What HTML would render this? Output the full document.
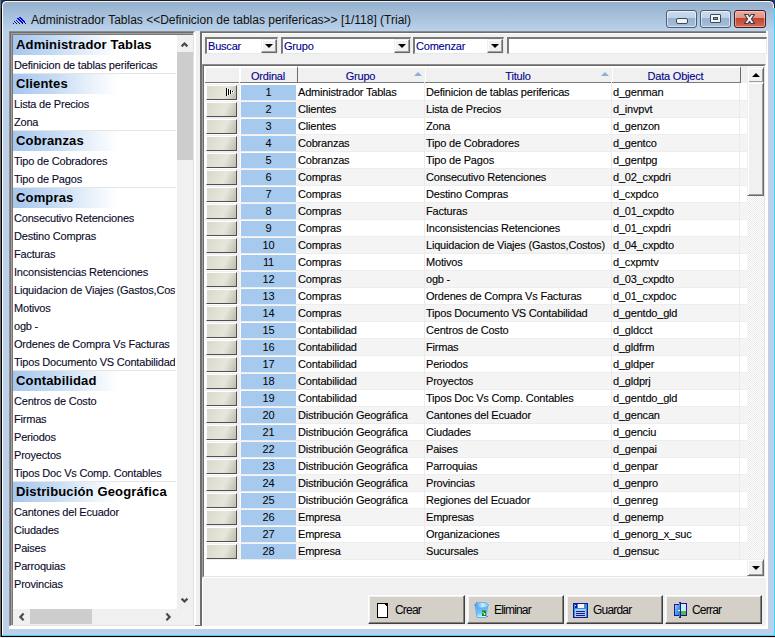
<!DOCTYPE html>
<html><head><meta charset="utf-8"><style>
*{margin:0;padding:0;box-sizing:border-box}
html,body{width:775px;height:638px;overflow:hidden}
body{position:relative;background:#BCD1E9;font-family:"Liberation Sans",sans-serif;font-size:11px;color:#000;letter-spacing:-.2px}
div,span,b,i,svg{position:absolute;display:block;font-weight:normal;font-style:normal;white-space:nowrap}
.abs{position:absolute}
/* frame */
#tb{left:0;top:0;width:775px;height:31px;background:linear-gradient(#92AECB,#BAD2EB)}
#tbl0{left:0;top:0;width:775px;height:1px;background:#1c1c1c}
#tbl1{left:0;top:1px;width:775px;height:1px;background:#F0F5FB}
#fl0{left:0;top:0;width:1px;height:638px;background:#707070}
#fl1{left:1px;top:0;width:1px;height:637px;background:#000}
#fl2{left:2px;top:1px;width:1px;height:635px;background:#fff}
#fb0{left:2px;top:635px;width:773px;height:1px;background:#3CD3F5}
#fb1{left:1px;top:636px;width:774px;height:1px;background:#000}
#fb2{left:0;top:637px;width:775px;height:1px;background:#E8E8E8}
#fr0{left:774px;top:1px;width:1px;height:635px;background:#3CD3F5}
#title{left:31px;top:13px;font-size:12px;line-height:14px;color:#101010;letter-spacing:0}
/* caption buttons */
.cb{top:10px;height:18px;width:31px;border:1px solid #4D5D73;border-radius:3px;background:linear-gradient(#CCDCEE 0,#BED1E7 45%,#98B2CF 46%,#A6BFDA 100%);box-shadow:inset 0 0 0 1px rgba(255,255,255,.55)}
#cmin{left:666px}
#cmax{left:700px}
#ccls{left:734px;width:32px;border-color:#4A1A22;background:linear-gradient(#E9AC9F 0,#DE9485 45%,#C2462B 46%,#D06A54 100%);box-shadow:inset 0 0 0 1px rgba(255,220,210,.5)}
/* client */
#client{left:9px;top:31px;width:759px;height:598px;background:#F0F0F0}
/* listbox */
#lb{left:9px;top:31px;width:186px;height:596px;border-top:1px solid #8E8E8E;border-left:1px solid #8E8E8E;border-right:1px solid #fff;border-bottom:1px solid #fff}
#lb2{left:10px;top:32px;width:184px;height:594px;border-top:1px solid #6E6E6E;border-left:1px solid #6E6E6E;border-right:1px solid #E3E3E3;border-bottom:1px solid #E3E3E3}
#lb3{left:11px;top:33px;width:182px;height:592px;border-top:1px solid #A0A0A0;border-left:1px solid #A0A0A0}
#lb4{left:12px;top:34px;width:181px;height:591px;border-top:1px solid #787878;border-left:1px solid #787878}
#lbc{left:13px;top:35px;width:164px;height:574px;background:#fff;overflow:hidden}
.lh{left:0;width:164px;height:20px;background:linear-gradient(90deg,#A6C6EE 0,#C4DAF3 40px,#E6F0FA 75px,#fff 105px)}
.lh span{left:3px;top:0;font-weight:bold;font-size:13px;line-height:20px;letter-spacing:.15px;color:#000}
.li{left:1px;width:161px;overflow:hidden;height:18px;line-height:18px;padding-top:1px;color:#0A0A28;font-size:11px}
.sep{left:0;width:163px;height:1px;background:#E6E6E6}
/* left scrollbars */
#lvs{left:177px;top:35px;width:16px;height:574px;background:#F0F0F0}
#lvthumb{left:177px;top:52px;width:16px;height:108px;background:#CDCDCD}
#lhs{left:13px;top:609px;width:164px;height:16px;background:#F0F0F0}
#lhthumb{left:30px;top:609px;width:62px;height:15px;background:#CDCDCD}
#lcorner{left:177px;top:609px;width:16px;height:16px;background:#F0F0F0}
/* splitter */
#spw{left:194px;top:33px;width:2px;height:593px;background:#fff}
#spd{left:200px;top:31px;width:2px;height:596px;background:#6E6E6E}
#spb{left:195px;top:625px;width:6px;height:1px;background:#6E6E6E}
/* right pane */
#rpt0{left:200px;top:31px;width:567px;height:1px;background:#8A8A8A}
#rpt1{left:200px;top:32px;width:567px;height:1px;background:#6E6E6E}
#rpw{left:202px;top:33px;width:565px;height:1px;background:#fff}
#rpwl{left:202px;top:33px;width:1px;height:594px;background:#fff}
#crt{left:766px;top:31px;width:2px;height:597px;background:#fff}
#crb{left:9px;top:626px;width:759px;height:3px;background:#fff}
/* combos */
.cmb{top:37px;height:17px;background:#fff;border-top:2px solid #7A7A7A;border-left:2px solid #7A7A7A;border-right:1px solid #E8E8E8;border-bottom:1px solid #E8E8E8}
.cmb span{left:1px;top:0;line-height:14px;color:#00008C;font-size:11px}
.dd{top:0;right:0;width:16px;height:14px;background:#F0F0F0;border-top:1px solid #F0F0F0;border-left:1px solid #F0F0F0;border-right:1px solid #696969;border-bottom:1px solid #696969;box-shadow:inset -1px -1px 0 #A0A0A0,inset 1px 1px 0 #fff}
.dd:after{content:"";position:absolute;left:3px;top:4px;border-left:4px solid transparent;border-right:4px solid transparent;border-top:4px solid #000}
/* grid */
#grid{left:202px;top:64px;width:564px;height:514px;border-top:1px solid #8A8A8A;border-left:1px solid #A0A0A0;border-right:1px solid #fff;border-bottom:1px solid #fff;background:#fff}
#grid2{left:203px;top:65px;width:562px;height:512px;border-top:1px solid #6A6A6A;border-left:1px solid #6A6A6A;border-right:1px solid #E3E3E3;border-bottom:1px solid #E3E3E3}
#gc{left:204px;top:66px;width:560px;height:510px;background:#fff;overflow:hidden;border-left:1px solid #fff}
#gi{left:0;top:0;width:559px;height:510px}
/* inside gc origin (205,66) */
.hd{top:0;height:17px;background:#F0F0F0;border-top:2px solid #fff;border-left:1px solid #fff}
.hdl{top:16px;height:1px;background:#7A7A7A}
.hd span{left:-2px;right:0;top:2px;text-align:center;color:#00008C;line-height:12px}
.sort{top:6px;width:0;height:0;border-left:4px solid transparent;border-right:4px solid transparent;border-bottom:4px solid #8FAED3}
.r{left:0;width:542px;height:17px;background:#fff}
.r.alt{background:linear-gradient(#EDEDED 0 1px,#F4F4F4 1px 17px,#EDEDED 17px);height:18px;z-index:1}
.rb{left:1px;top:2px;width:31px;height:15px;background:linear-gradient(115deg,#D8D8CA 0,#E2E2D6 40%,#E6E6DC 60%,#D4D4C6 78%,#BDBDAE 100%);border-top:1px solid #fff;border-left:1px solid #fff;border-right:1px solid #505050;border-bottom:1px solid #505050}
.ord{left:36px;top:2px;width:55px;height:15px;background:#A6C9EE;text-align:center;line-height:15px;color:#000}
.c1{left:93px;top:3px;line-height:13px}
.c2{left:221px;top:3px;line-height:13px}
.c3{left:408px;top:3px;line-height:13px}
.vl{top:17px;width:1px;height:477px;background:#EBEBEB;z-index:2}
.ptr{left:19px;top:2px;width:8px;height:8px}
/* grid vscroll */
#gvs{left:747px;top:67px;width:17px;height:509px;background:repeating-conic-gradient(#fff 0 25%,#E9E9E9 0 50%) 0 0/2px 2px}
.sbtn{left:747px;width:17px;background:#F0F0F0;border-top:1px solid #F0F0F0;border-left:1px solid #F0F0F0;border-right:1px solid #696969;border-bottom:1px solid #696969;box-shadow:inset 1px 1px 0 #fff,inset -1px -1px 0 #A0A0A0}
#gup{top:67px;height:16px}
#gthumb{top:82px;height:114px}
#gdn{top:559px;height:17px}
.tri{left:4px;width:0;height:0;border-left:4px solid transparent;border-right:4px solid transparent}
/* bottom buttons */
.btn{top:595px;width:97px;height:29px;background:#D4D0C8;border-top:1px solid #fff;border-left:1px solid #fff;border-right:1px solid #404040;border-bottom:1px solid #404040;box-shadow:inset -1px -1px 0 #808080,inset 1px 1px 0 #F0F0F0}
.btn span{left:26px;top:7px;font-size:12px;line-height:14px;letter-spacing:-.8px;color:#000}
.r span,.li,.cmb span,.hd span{-webkit-text-stroke:.1px currentColor}

.ic{left:0;top:0;width:35px;height:17px;background:#F0F0F0;border-top:1px solid #fff;border-left:1px solid #fff}

</style></head><body>
<div id="tb"></div><div id="tbl0"></div><div id="tbl1"></div>
<div id="fl0"></div><div id="fl1"></div><div id="fl2"></div>
<div id="fb0"></div><div id="fb1"></div><div id="fb2"></div><div id="fr0"></div>
<svg class="abs" style="left:13px;top:17px" width="13" height="7" viewBox="0 0 13 7" shape-rendering="crispEdges"><g fill="#0000F0"><rect x="0" y="6" width="1" height="1"/><rect x="1" y="4" width="1" height="1"/><rect x="2" y="5" width="1" height="1"/><rect x="3" y="6" width="1" height="1"/><rect x="3" y="3" width="1" height="1"/><rect x="4" y="4" width="1" height="1"/><rect x="5" y="5" width="1" height="1"/><rect x="6" y="6" width="1" height="1"/><rect x="4" y="1" width="1" height="1"/><rect x="5" y="2" width="1" height="1"/><rect x="6" y="3" width="1" height="1"/><rect x="7" y="4" width="1" height="1"/><rect x="8" y="5" width="1" height="1"/><rect x="9" y="6" width="1" height="1"/><rect x="5" y="1" width="1" height="1"/><rect x="6" y="2" width="1" height="1"/><rect x="7" y="3" width="1" height="1"/><rect x="8" y="4" width="1" height="1"/><rect x="9" y="5" width="1" height="1"/><rect x="6" y="0" width="1" height="1"/><rect x="7" y="1" width="1" height="1"/><rect x="8" y="2" width="1" height="1"/><rect x="9" y="3" width="1" height="1"/><rect x="10" y="4" width="1" height="1"/><rect x="11" y="5" width="1" height="1"/><rect x="12" y="6" width="1" height="1"/><rect x="7" y="0" width="1" height="1"/><rect x="8" y="1" width="1" height="1"/><rect x="9" y="2" width="1" height="1"/><rect x="10" y="3" width="1" height="1"/><rect x="11" y="4" width="1" height="1"/></g><g fill="#101010"><rect x="3" y="6" width="1" height="1"/><rect x="6" y="6" width="1" height="1"/><rect x="9" y="6" width="1" height="1"/><rect x="12" y="6" width="1" height="1"/></g></svg>
<svg style="left:0;top:0" width="8" height="8" viewBox="0 0 8 8"><rect x="1" y="0" width="7" height="8" fill="#9AB3D0"/><path d="M1 0H8V1H6Q2 1 2 5V8H1Z" fill="#0B3F86"/><path d="M2.5 8V5.5Q2.5 1.5 6 1.5H8" stroke="#fff" stroke-width="1" fill="none"/><path d="M1.5 8V5Q1.5 0.5 6 0.5H8" stroke="#1A1A1A" stroke-width="1" fill="none"/></svg>
<svg style="left:767px;top:0" width="8" height="8" viewBox="0 0 8 8"><rect x="0" y="0" width="8" height="8" fill="#9AB3D0"/><path d="M0 0H8V8H7V5Q7 1 3 1H0Z" fill="#0B3F86"/><path d="M0 1.5H2Q6.5 1.5 6.5 6V8" stroke="#fff" stroke-width="1" fill="none"/><path d="M0 0.5H2Q7.5 0.5 7.5 6V8" stroke="#1A1A1A" stroke-width="1" fill="none"/></svg>
<div id="title">Administrador Tablas &lt;&lt;Definicion de tablas perifericas&gt;&gt; [1/118] (Trial)</div>
<div class="cb" id="cmin"><i style="left:9px;top:7px;width:12px;height:6px;background:#F4F4F4;border:1px solid #3A4A5E;border-radius:2px"></i></div>
<div class="cb" id="cmax"><i style="left:9px;top:3px;width:11px;height:9px;background:#F4F4F4;border:1px solid #3A4A5E;border-radius:1px"><i style="left:2px;top:2px;width:5px;height:3px;background:#7E9CC2;border:1px solid #3A4A5E"></i></i></div>
<div class="cb" id="ccls"><svg class="abs" style="left:8px;top:2px" width="13" height="12" viewBox="0 0 13 12"><path d="M1.5 1.5H5L6.5 3.7L8 1.5H11.5L8.4 6L11.5 10.5H8L6.5 8.3L5 10.5H1.5L4.6 6Z" fill="#F6F6F6" stroke="#3A3C50" stroke-width="1.1" stroke-linejoin="round"/></svg></div>

<div id="client"></div>
<div id="lb"></div><div id="lb2"></div><div id="lb3"></div><div id="lb4"></div>
<div id="lbc">
<div class="lh" style="top:0px"><span>Administrador Tablas</span></div>
<div class="li" style="top:20px">Definicion de tablas perifericas</div>
<div class="sep" style="top:38px"></div>
<div class="lh" style="top:39px"><span>Clientes</span></div>
<div class="li" style="top:59px">Lista de Precios</div>
<div class="li" style="top:77px">Zona</div>
<div class="sep" style="top:95px"></div>
<div class="lh" style="top:96px"><span>Cobranzas</span></div>
<div class="li" style="top:116px">Tipo de Cobradores</div>
<div class="li" style="top:134px">Tipo de Pagos</div>
<div class="sep" style="top:152px"></div>
<div class="lh" style="top:153px"><span>Compras</span></div>
<div class="li" style="top:173px">Consecutivo Retenciones</div>
<div class="li" style="top:191px">Destino Compras</div>
<div class="li" style="top:209px">Facturas</div>
<div class="li" style="top:227px">Inconsistencias Retenciones</div>
<div class="li" style="top:245px">Liquidacion de Viajes (Gastos,Costos)</div>
<div class="li" style="top:263px">Motivos</div>
<div class="li" style="top:281px">ogb -</div>
<div class="li" style="top:299px">Ordenes de Compra Vs Facturas</div>
<div class="li" style="top:317px">Tipos Documento VS Contabilidad</div>
<div class="sep" style="top:335px"></div>
<div class="lh" style="top:336px"><span>Contabilidad</span></div>
<div class="li" style="top:356px">Centros de Costo</div>
<div class="li" style="top:374px">Firmas</div>
<div class="li" style="top:392px">Periodos</div>
<div class="li" style="top:410px">Proyectos</div>
<div class="li" style="top:428px">Tipos Doc Vs Comp. Contables</div>
<div class="sep" style="top:446px"></div>
<div class="lh" style="top:447px"><span>Distribución Geográfica</span></div>
<div class="li" style="top:467px">Cantones del Ecuador</div>
<div class="li" style="top:485px">Ciudades</div>
<div class="li" style="top:503px">Paises</div>
<div class="li" style="top:521px">Parroquias</div>
<div class="li" style="top:539px">Provincias</div>
</div>
<div id="lvs"></div><div id="lvthumb"></div>
<svg class="abs" style="left:180px;top:40px" width="10" height="8" viewBox="0 0 10 8"><path d="M1.6 6.4L4.5 3.5L7.4 6.4" stroke="#4A4A4A" stroke-width="2.2" fill="none" stroke-linejoin="miter"/></svg>
<svg class="abs" style="left:180px;top:597px" width="10" height="8" viewBox="0 0 10 8"><path d="M1.6 1.6L4.5 4.5L7.4 1.6" stroke="#4A4A4A" stroke-width="2.2" fill="none" stroke-linejoin="miter"/></svg>
<div id="lhs"></div><div id="lhthumb"></div><div id="lcorner"></div>
<svg class="abs" style="left:17px;top:612px" width="8" height="10" viewBox="0 0 8 10"><path d="M6.6 1.6L3.4 4.9L6.6 8.2" stroke="#4A4A4A" stroke-width="2.2" fill="none"/></svg>
<svg class="abs" style="left:165px;top:612px" width="8" height="10" viewBox="0 0 8 10"><path d="M1.4 1.6L4.6 4.9L1.4 8.2" stroke="#4A4A4A" stroke-width="2.2" fill="none"/></svg>

<div id="spw"></div><div id="spd"></div><div id="spb"></div>
<div id="rpt0"></div><div id="rpt1"></div><div id="rpw"></div><div id="rpwl"></div>
<div id="crt"></div><div id="crb"></div>

<div class="cmb" style="left:205px;width:73px"><span>Buscar</span><i class="dd"></i></div>
<div class="cmb" style="left:281px;width:130px"><span>Grupo</span><i class="dd"></i></div>
<div class="cmb" style="left:413px;width:91px"><span>Comenzar</span><i class="dd"></i></div>
<div class="cmb" style="left:507px;width:260px"></div>

<div id="grid"></div><div id="grid2"></div>
<div id="gc">
<div class="hd" style="left:0;width:34px"></div><i class="hdl" style="left:0;width:34px"></i>
<div class="hd" style="left:35px;width:57px"><span>Ordinal</span></div><i class="hdl" style="left:35px;width:57px"></i>
<div class="hd" style="left:92px;width:128px;border-left:1px solid #6A6A6A"><span>Grupo</span></div><i class="hdl" style="left:92px;width:127px"></i>
<i class="sort" style="left:209px"></i>
<div class="hd" style="left:220px;width:187px"><span>Titulo</span></div><i class="hdl" style="left:220px;width:186px"></i>
<i class="sort" style="left:396px"></i>
<div class="hd" style="left:407px;width:129px;border-right:1px solid #6A6A6A"><span>Data Object</span></div><i class="hdl" style="left:407px;width:129px"></i>
<div class="hd" style="left:536px;width:6px;border:0"></div>
<div style="left:0;top:17px;width:542px;height:493px">
<div class="r" style="top:0px"><b class="ic"></b><b class="rb"><svg class="ptr" width="8" height="8" viewBox="0 0 8 8" shape-rendering="crispEdges"><g fill="#000"><rect x="0" y="0" width="1" height="8"/><rect x="2" y="1" width="1" height="6"/><rect x="4" y="2" width="1" height="4"/><rect x="6" y="3" width="1" height="1"/></g><g fill="#fff"><rect x="1" y="0" width="1" height="8"/><rect x="3" y="1" width="1" height="6"/><rect x="5" y="2" width="1" height="4"/><rect x="7" y="3" width="1" height="2"/></g></svg></b><b class="ord">1</b><span class="c1">Administrador Tablas</span><span class="c2">Definicion de tablas perifericas</span><span class="c3">d_genman</span></div>
<div class="r alt" style="top:17px"><b class="ic"></b><b class="rb"></b><b class="ord">2</b><span class="c1">Clientes</span><span class="c2">Lista de Precios</span><span class="c3">d_invpvt</span></div>
<div class="r" style="top:34px"><b class="ic"></b><b class="rb"></b><b class="ord">3</b><span class="c1">Clientes</span><span class="c2">Zona</span><span class="c3">d_genzon</span></div>
<div class="r alt" style="top:51px"><b class="ic"></b><b class="rb"></b><b class="ord">4</b><span class="c1">Cobranzas</span><span class="c2">Tipo de Cobradores</span><span class="c3">d_gentco</span></div>
<div class="r" style="top:68px"><b class="ic"></b><b class="rb"></b><b class="ord">5</b><span class="c1">Cobranzas</span><span class="c2">Tipo de Pagos</span><span class="c3">d_gentpg</span></div>
<div class="r alt" style="top:85px"><b class="ic"></b><b class="rb"></b><b class="ord">6</b><span class="c1">Compras</span><span class="c2">Consecutivo Retenciones</span><span class="c3">d_02_cxpdri</span></div>
<div class="r" style="top:102px"><b class="ic"></b><b class="rb"></b><b class="ord">7</b><span class="c1">Compras</span><span class="c2">Destino Compras</span><span class="c3">d_cxpdco</span></div>
<div class="r alt" style="top:119px"><b class="ic"></b><b class="rb"></b><b class="ord">8</b><span class="c1">Compras</span><span class="c2">Facturas</span><span class="c3">d_01_cxpdto</span></div>
<div class="r" style="top:136px"><b class="ic"></b><b class="rb"></b><b class="ord">9</b><span class="c1">Compras</span><span class="c2">Inconsistencias Retenciones</span><span class="c3">d_01_cxpdri</span></div>
<div class="r alt" style="top:153px"><b class="ic"></b><b class="rb"></b><b class="ord">10</b><span class="c1">Compras</span><span class="c2">Liquidacion de Viajes (Gastos,Costos)</span><span class="c3">d_04_cxpdto</span></div>
<div class="r" style="top:170px"><b class="ic"></b><b class="rb"></b><b class="ord">11</b><span class="c1">Compras</span><span class="c2">Motivos</span><span class="c3">d_cxpmtv</span></div>
<div class="r alt" style="top:187px"><b class="ic"></b><b class="rb"></b><b class="ord">12</b><span class="c1">Compras</span><span class="c2">ogb -</span><span class="c3">d_03_cxpdto</span></div>
<div class="r" style="top:204px"><b class="ic"></b><b class="rb"></b><b class="ord">13</b><span class="c1">Compras</span><span class="c2">Ordenes de Compra Vs Facturas</span><span class="c3">d_01_cxpdoc</span></div>
<div class="r alt" style="top:221px"><b class="ic"></b><b class="rb"></b><b class="ord">14</b><span class="c1">Compras</span><span class="c2">Tipos Documento VS Contabilidad</span><span class="c3">d_gentdo_gld</span></div>
<div class="r" style="top:238px"><b class="ic"></b><b class="rb"></b><b class="ord">15</b><span class="c1">Contabilidad</span><span class="c2">Centros de Costo</span><span class="c3">d_gldcct</span></div>
<div class="r alt" style="top:255px"><b class="ic"></b><b class="rb"></b><b class="ord">16</b><span class="c1">Contabilidad</span><span class="c2">Firmas</span><span class="c3">d_gldfrm</span></div>
<div class="r" style="top:272px"><b class="ic"></b><b class="rb"></b><b class="ord">17</b><span class="c1">Contabilidad</span><span class="c2">Periodos</span><span class="c3">d_gldper</span></div>
<div class="r alt" style="top:289px"><b class="ic"></b><b class="rb"></b><b class="ord">18</b><span class="c1">Contabilidad</span><span class="c2">Proyectos</span><span class="c3">d_gldprj</span></div>
<div class="r" style="top:306px"><b class="ic"></b><b class="rb"></b><b class="ord">19</b><span class="c1">Contabilidad</span><span class="c2">Tipos Doc Vs Comp. Contables</span><span class="c3">d_gentdo_gld</span></div>
<div class="r alt" style="top:323px"><b class="ic"></b><b class="rb"></b><b class="ord">20</b><span class="c1">Distribución Geográfica</span><span class="c2">Cantones del Ecuador</span><span class="c3">d_gencan</span></div>
<div class="r" style="top:340px"><b class="ic"></b><b class="rb"></b><b class="ord">21</b><span class="c1">Distribución Geográfica</span><span class="c2">Ciudades</span><span class="c3">d_genciu</span></div>
<div class="r alt" style="top:357px"><b class="ic"></b><b class="rb"></b><b class="ord">22</b><span class="c1">Distribución Geográfica</span><span class="c2">Paises</span><span class="c3">d_genpai</span></div>
<div class="r" style="top:374px"><b class="ic"></b><b class="rb"></b><b class="ord">23</b><span class="c1">Distribución Geográfica</span><span class="c2">Parroquias</span><span class="c3">d_genpar</span></div>
<div class="r alt" style="top:391px"><b class="ic"></b><b class="rb"></b><b class="ord">24</b><span class="c1">Distribución Geográfica</span><span class="c2">Provincias</span><span class="c3">d_genpro</span></div>
<div class="r" style="top:408px"><b class="ic"></b><b class="rb"></b><b class="ord">25</b><span class="c1">Distribución Geográfica</span><span class="c2">Regiones del Ecuador</span><span class="c3">d_genreg</span></div>
<div class="r alt" style="top:425px"><b class="ic"></b><b class="rb"></b><b class="ord">26</b><span class="c1">Empresa</span><span class="c2">Empresas</span><span class="c3">d_genemp</span></div>
<div class="r" style="top:442px"><b class="ic"></b><b class="rb"></b><b class="ord">27</b><span class="c1">Empresa</span><span class="c2">Organizaciones</span><span class="c3">d_genorg_x_suc</span></div>
<div class="r alt" style="top:459px"><b class="ic"></b><b class="rb"></b><b class="ord">28</b><span class="c1">Empresa</span><span class="c2">Sucursales</span><span class="c3">d_gensuc</span></div>
</div>
<i class="vl" style="left:219px"></i><i class="vl" style="left:406px"></i><i class="vl" style="left:534px"></i>
</div>
<div id="gvs"></div>
<div class="sbtn" id="gup"><i class="tri" style="top:5px;border-bottom:4px solid #000"></i></div>
<div class="sbtn" id="gthumb"></div>
<div class="sbtn" id="gdn"><i class="tri" style="top:6px;border-top:4px solid #000"></i></div>

<div class="btn" style="left:368px"><span>Crear</span></div>
<div class="btn" style="left:467px"><span>Eliminar</span></div>
<div class="btn" style="left:566px"><span>Guardar</span></div>
<div class="btn" style="left:665px"><span>Cerrar</span></div>
<svg style="left:377px;top:603px" width="11" height="15" viewBox="0 0 11 15" shape-rendering="crispEdges"><rect x="0.5" y="0.5" width="10" height="14" fill="#fff" stroke="#000"/><rect x="9" y="1" width="1" height="1" fill="#000"/><rect x="8" y="1" width="1" height="1" fill="#000"/><rect x="9" y="2" width="1" height="1" fill="#000"/></svg>
<svg style="left:474px;top:602px" width="15" height="16" viewBox="0 0 15 16">
<defs><linearGradient id="bl" x1="0" x2="1"><stop offset="0" stop-color="#3D86E6"/><stop offset=".6" stop-color="#C8F0FF"/><stop offset="1" stop-color="#6CC4F4"/></linearGradient>
<linearGradient id="bb" x1="0" y1="0" x2="0.3" y2="1"><stop offset="0" stop-color="#58A8F0"/><stop offset=".65" stop-color="#7CC4F4"/><stop offset="1" stop-color="#D8F8FF"/></linearGradient></defs>
<path d="M1.5 5L3 15.5H12L13.5 5Z" fill="url(#bb)" stroke="#5AB4F0" stroke-width="1"/>
<ellipse cx="7.5" cy="3.2" rx="7" ry="2.8" fill="url(#bl)" stroke="#5AB4F0" stroke-width="1"/>
<path d="M8 8.5H12V14H8Z" fill="#0C8A14"/><circle cx="10.5" cy="12" r=".9" fill="#fff"/><circle cx="9" cy="10.5" r=".7" fill="#cfe"/>
<rect x="2" y="0" width="1" height="1" fill="#F020F0"/><rect x="13" y="14" width="1" height="1" fill="#F020F0"/></svg>
<svg style="left:573px;top:603px" width="15" height="15" viewBox="0 0 15 15" shape-rendering="crispEdges">
<rect x="0" y="0" width="15" height="15" fill="#1C1490"/><rect x="1" y="1" width="13" height="13" fill="#2E94DC"/>
<rect x="5" y="1" width="6" height="4" fill="#F4F4F4"/><rect x="2" y="1" width="2" height="4" fill="#1C1490"/><rect x="2" y="2" width="1" height="1" fill="#C8FFFF"/>
<rect x="2" y="6" width="11" height="8" fill="#A6CCF2"/><rect x="3" y="8" width="9" height="1" fill="#1C1490"/><rect x="3" y="10" width="9" height="1" fill="#1C1490"/><rect x="3" y="12" width="9" height="1" fill="#1C1490"/></svg>
<svg style="left:674px;top:602px" width="14" height="16" viewBox="0 0 14 16" shape-rendering="crispEdges">
<defs><linearGradient id="dr" x1="0" y1="0" x2="1" y2="1"><stop offset="0" stop-color="#B8D4F4"/><stop offset=".5" stop-color="#4C9AE0"/><stop offset="1" stop-color="#1A78D0"/></linearGradient></defs>
<rect x="6" y="1" width="7" height="13" fill="#1C1490"/><rect x="7" y="2" width="5" height="7" fill="#CDECFA"/><rect x="7" y="9" width="5" height="4" fill="#4CBC3C"/>
<path d="M0 2H5V0H7V16H5V14H0Z" fill="#1C1490"/><path d="M1 3H5V1H6V15H5V13H1Z" fill="url(#dr)"/><rect x="5" y="8" width="1" height="1" fill="#fff"/><rect x="4" y="8" width="1" height="1" fill="#E8F4FF"/></svg>
</body></html>
